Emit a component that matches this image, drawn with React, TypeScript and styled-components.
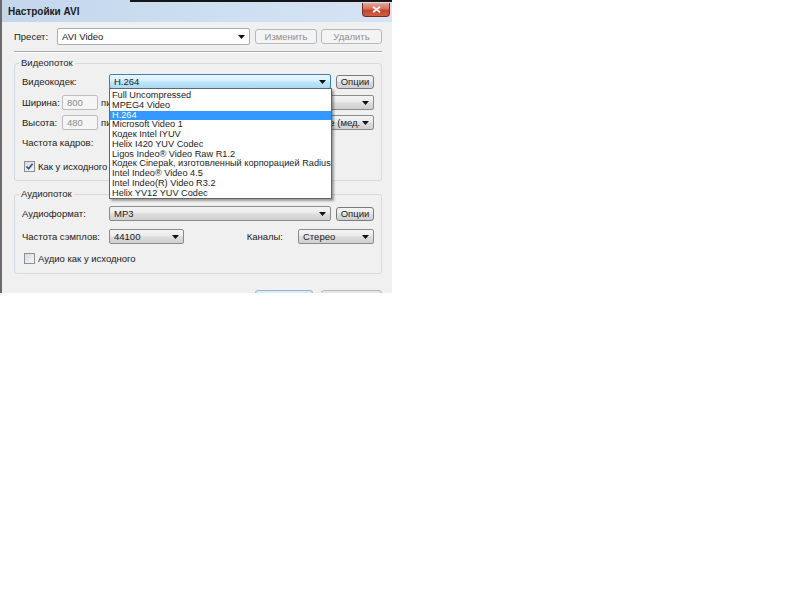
import React from "react";
import styled, { createGlobalStyle, css } from "styled-components";

const Global = createGlobalStyle`
  html, body { margin: 0; padding: 0; background: #ffffff; }
  body { font-family: "Liberation Sans", Arial, sans-serif; }
`;

const Window = styled.div`
  width: 392px;
  height: 293px;
  box-sizing: border-box;
  overflow: hidden;
  background: #f0f0f0;
  border-left: 2px solid #6a6a6a;
  display: flex;
  flex-direction: column;
  font-family: "Liberation Sans", Arial, sans-serif;
  font-size: 9.5px;
  color: #1a1a1a;
`;

const TitleBar = styled.div`
  flex: none;
  height: 22px;
  box-sizing: border-box;
  padding: 2px 0 0 6px;
  background:
    linear-gradient(90deg, transparent 128px, #151515 128px) top left / 100% 2px no-repeat,
    linear-gradient(90deg, #c3d6ec 0%, #cddff2 60%, #d6e4f3 100%);
  display: flex;
  align-items: flex-start;
`;

const Title = styled.span`
  font-size: 10px;
  font-weight: bold;
  line-height: 20px;
  color: #1b1b1b;
  flex: 1;
`;

const CloseButton = styled.div`
  width: 28px;
  height: 14px;
  margin: 1px 2px 0 0;
  box-sizing: border-box;
  border: 1px solid #7a2b1e;
  border-top: none;
  border-radius: 0 0 4px 4px;
  background: linear-gradient(#e7a697 0%, #d7715c 45%, #c4452c 55%, #cf5f45 100%);
  display: flex;
  align-items: center;
  justify-content: center;
`;

const Content = styled.div`
  flex: 1;
  display: flex;
  flex-direction: column;
  padding: 0 10px 0 12px;
`;

const PresetRow = styled.div`
  display: flex;
  align-items: center;
  height: 17px;
  margin-top: 6px;
`;

const Label = styled.span<{ $w?: number; $mr?: number }>`
  flex: none;
  white-space: nowrap;
  ${(p) => (p.$w !== undefined ? css`width: ${p.$w}px;` : "")}
  ${(p) => (p.$mr !== undefined ? css`margin-right: ${p.$mr}px;` : "")}
`;

type ComboVariant = "white" | "focus" | "normal";

const comboStyles: Record<ComboVariant, ReturnType<typeof css>> = {
  white: css`
    background: #ffffff;
    border-color: #a7adb6;
  `,
  focus: css`
    background: linear-gradient(#eaf6fd 0%, #d9f0fc 45%, #bee6fd 52%, #a9daf5 100%);
    border-color: #3c7fb1;
  `,
  normal: css`
    background: linear-gradient(#f3f3f3 0%, #ebebeb 45%, #dddddd 52%, #d0d0d0 100%);
    border-color: #8b8b8b;
  `,
};

const ComboBox = styled.div<{ $w: number; $v: ComboVariant; $h?: number; $ml?: number }>`
  position: relative;
  flex: none;
  box-sizing: border-box;
  width: ${(p) => p.$w}px;
  height: ${(p) => p.$h ?? 15}px;
  margin-left: ${(p) => p.$ml ?? 0}px;
  display: flex;
  align-items: center;
  padding: 0 4px 0 4px;
  border: 1px solid;
  border-radius: 2px;
  ${(p) => comboStyles[p.$v]}
`;

const ComboText = styled.span`
  flex: 1;
  min-width: 0;
  overflow: hidden;
  white-space: nowrap;
  color: #1a1a1a;
`;

const ArrowIcon = () => (
  <svg width="7" height="4" viewBox="0 0 7 4" style={{ flex: "none", marginLeft: 2 }}>
    <path d="M0 0H7L3.5 4Z" fill="#111" />
  </svg>
);

const Button = styled.div<{ $w: number; $disabled?: boolean; $ml?: number; $h?: number }>`
  flex: none;
  box-sizing: border-box;
  width: ${(p) => p.$w}px;
  height: ${(p) => p.$h ?? 15}px;
  margin-left: ${(p) => p.$ml ?? 0}px;
  display: flex;
  align-items: center;
  justify-content: center;
  border: 1px solid #7a7a7a;
  border-radius: 3px;
  background: linear-gradient(#f3f3f3 0%, #ebebeb 45%, #dddddd 52%, #cfcfcf 100%);
  color: #1a1a1a;
  ${(p) =>
    p.$disabled &&
    css`
      border-color: #b5b9bc;
      background: #f4f4f4;
      color: #8e8e8e;
    `}
`;

const Separator = styled.div`
  height: 0;
  margin-top: 6px;
  border-top: 1px solid #a9a9a9;
  border-bottom: 1px solid #ffffff;
`;

const Group = styled.fieldset<{ $mt: number; $pt: number; $pb: number }>`
  margin: ${(p) => p.$mt}px 0 0 0;
  padding: ${(p) => p.$pt}px 7px ${(p) => p.$pb}px 7px;
  border: 1px solid #d3dbe1;
  border-radius: 3px;
  min-width: 0;
`;

const Legend = styled.legend`
  font-size: 9.5px;
  line-height: 12px;
  padding: 0 2px;
  margin-left: -3px;
  color: #1e1e1e;
`;

const GroupBody = styled.div`
  display: flex;
  flex-direction: column;
`;

const Row = styled.div<{ $mt?: number; $h?: number }>`
  display: flex;
  align-items: center;
  height: ${(p) => p.$h ?? 15}px;
  margin-top: ${(p) => p.$mt ?? 0}px;
`;

const TextInput = styled.div<{ $w: number }>`
  flex: none;
  box-sizing: border-box;
  width: ${(p) => p.$w}px;
  height: 15px;
  border: 1px solid #bcbcbc;
  border-radius: 2px;
  background: #f5f5f5;
  color: #8c8c8c;
  display: flex;
  align-items: center;
  padding-left: 4px;
`;

const Unit = styled.span`
  margin-left: 3px;
  white-space: nowrap;
`;

const Spacer = styled.div`
  flex: 1;
`;

const CheckBox = styled.div`
  flex: none;
  box-sizing: border-box;
  width: 11px;
  height: 11px;
  margin-left: 2px;
  margin-right: 3px;
  border: 1px solid #8e8f8f;
  background: linear-gradient(135deg, #d6d9de 0%, #f7f7f7 100%);
  display: flex;
  align-items: center;
  justify-content: center;
`;

const DropList = styled.div`
  position: absolute;
  left: -1px;
  top: 100%;
  z-index: 10;
  box-sizing: border-box;
  width: 223px;
  padding-top: 2px;
  border: 1px solid #646464;
  background: #ffffff;
  box-shadow: 2px 2px 2px rgba(0, 0, 0, 0.35);
  font-size: 9.2px;
`;

const DropItem = styled.div<{ $sel?: boolean }>`
  height: 9.77px;
  line-height: 9.77px;
  padding-left: 2px;
  white-space: nowrap;
  overflow: hidden;
  color: #1a1a1a;
  ${(p) =>
    p.$sel &&
    css`
      background: #3399ff;
      color: #ffffff;
    `}
`;

const BottomRow = styled.div`
  display: flex;
  justify-content: flex-end;
  margin-top: 16px;
`;

const DialogButton = styled.div<{ $w: number; $primary?: boolean; $ml?: number }>`
  flex: none;
  box-sizing: border-box;
  width: ${(p) => p.$w}px;
  height: 18px;
  margin-left: ${(p) => p.$ml ?? 0}px;
  border: 1px solid ${(p) => (p.$primary ? "#8fb4cc" : "#b9b9b9")};
  border-radius: 3px;
  background: ${(p) => (p.$primary ? "#dcecf6" : "#e6e6e6")};
`;

const codecs = [
  "Full Uncompressed",
  "MPEG4 Video",
  "H.264",
  "Microsoft Video 1",
  "Кодек Intel IYUV",
  "Helix I420 YUV Codec",
  "Ligos Indeo® Video Raw R1.2",
  "Кодек Cinepak, изготовленный корпорацией Radius",
  "Intel Indeo® Video 4.5",
  "Intel Indeo(R) Video R3.2",
  "Helix YV12 YUV Codec",
];

const CheckMark = () => (
  <svg width="9" height="9" viewBox="0 0 9 9">
    <path d="M1.5 4.5L3.6 6.8L7.6 1.8" fill="none" stroke="#3b5287" strokeWidth="1.7" />
  </svg>
);

const CloseIcon = () => (
  <svg width="9" height="7" viewBox="0 0 9 7">
    <path d="M1 0.8L8 6.2M8 0.8L1 6.2" stroke="#ffffff" strokeWidth="1.8" />
  </svg>
);

export default function App() {
  return (
    <>
      <Global />
      <Window>
        <TitleBar>
          <Title>Настройки AVI</Title>
          <CloseButton>
            <CloseIcon />
          </CloseButton>
        </TitleBar>
        <Content>
          <PresetRow>
            <Label $w={43}>Пресет:</Label>
            <ComboBox $w={193} $v="white" $h={17}>
              <ComboText>AVI Video</ComboText>
              <ArrowIcon />
            </ComboBox>
            <Button $w={62} $disabled $ml={5}>Изменить</Button>
            <Button $w={61} $disabled $ml={4}>Удалить</Button>
          </PresetRow>
          <Separator />

          <Group $mt={4} $pt={5} $pb={8}>
            <Legend>Видеопоток</Legend>
            <GroupBody>
              <Row>
                <Label $w={87}>Видеокодек:</Label>
                <ComboBox $w={222} $v="focus">
                  <ComboText>H.264</ComboText>
                  <ArrowIcon />
                  <DropList>
                    {codecs.map((c) => (
                      <DropItem key={c} $sel={c === "H.264"}>
                        {c}
                      </DropItem>
                    ))}
                  </DropList>
                </ComboBox>
                <Button $w={38} $ml={5} $h={14}>Опции</Button>
              </Row>
              <Row $mt={6}>
                <Label $w={40}>Ширина:</Label>
                <TextInput $w={36}>800</TextInput>
                <Unit>пикселей</Unit>
                <Spacer />
                <ComboBox $w={80} $v="normal">
                  <ComboText />
                  <ArrowIcon />
                </ComboBox>
              </Row>
              <Row $mt={5}>
                <Label $w={40}>Высота:</Label>
                <TextInput $w={36}>480</TextInput>
                <Unit>пикселей</Unit>
                <Spacer />
                <ComboBox $w={83} $v="normal">
                  <ComboText>Среднее (мед.</ComboText>
                  <ArrowIcon />
                </ComboBox>
              </Row>
              <Row $mt={5}>
                <Label $w={87}>Частота кадров:</Label>
                <ComboBox $w={75} $v="normal">
                  <ComboText />
                  <ArrowIcon />
                </ComboBox>
              </Row>
              <Row $mt={10} $h={12}>
                <CheckBox>
                  <CheckMark />
                </CheckBox>
                <Label>Как у исходного</Label>
              </Row>
            </GroupBody>
          </Group>

          <Group $mt={7} $pt={6} $pb={9}>
            <Legend>Аудиопоток</Legend>
            <GroupBody>
              <Row>
                <Label $w={87}>Аудиоформат:</Label>
                <ComboBox $w={222} $v="normal">
                  <ComboText>MP3</ComboText>
                  <ArrowIcon />
                </ComboBox>
                <Button $w={38} $ml={5} $h={14}>Опции</Button>
              </Row>
              <Row $mt={8}>
                <Label $w={87}>Частота сэмплов:</Label>
                <ComboBox $w={75} $v="normal">
                  <ComboText>44100</ComboText>
                  <ArrowIcon />
                </ComboBox>
                <Spacer />
                <Label $mr={15}>Каналы:</Label>
                <ComboBox $w={76} $v="normal">
                  <ComboText>Стерео</ComboText>
                  <ArrowIcon />
                </ComboBox>
              </Row>
              <Row $mt={8} $h={12}>
                <CheckBox />
                <Label>Аудио как у исходного</Label>
              </Row>
            </GroupBody>
          </Group>

          <BottomRow>
            <DialogButton $w={58} $primary />
            <DialogButton $w={61} $ml={8} />
          </BottomRow>
        </Content>
      </Window>
    </>
  );
}
